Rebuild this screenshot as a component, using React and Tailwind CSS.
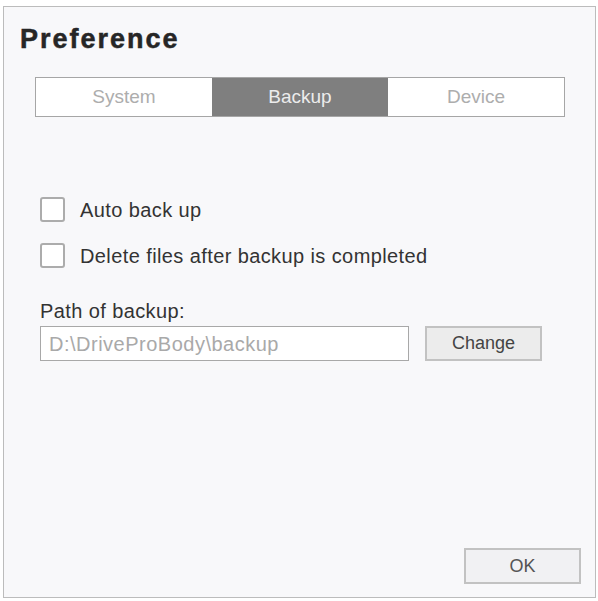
import { useState } from 'react';

const tabs = ['System', 'Backup', 'Device'];

const Check = ({ label, checked, onToggle }) => (
  <label className="flex items-center gap-[15px] cursor-pointer">
    <span
      onClick={onToggle}
      className="w-[25px] h-[25px] rounded-[3px] border-2 border-[#acacac] bg-white flex items-center justify-center"
    >
      {checked && <span className="w-[11px] h-[11px] bg-[#555]" />}
    </span>
    <span className="text-[20px] leading-none text-[#333] tracking-[0.4px]">{label}</span>
  </label>
);

export default function App() {
  const [tab, setTab] = useState('Backup');
  const [auto, setAuto] = useState(false);
  const [del, setDel] = useState(false);

  return (
    <div className="w-[598px] h-[601px] bg-white pt-[6px] pl-[3px] pr-[2px] pb-[3px] font-['Liberation_Sans',Arial,sans-serif]">
      <div className="h-full border border-[#bcbcbc] bg-[#f8f8fa] flex flex-col">
        <h1 className="pl-[16px] pt-[17px] text-[27px] leading-[30px] font-bold text-[#262626] tracking-[2px] [-webkit-text-stroke:0.5px_#262626]">
          Preference
        </h1>

        <div className="mt-[23px] ml-[31px] mr-[30px] h-[40px] grid grid-cols-3 border border-[#a6a6a6] bg-white">
          {tabs.map((t) => (
            <button
              key={t}
              onClick={() => setTab(t)}
              className={
                t === tab
                  ? 'bg-[#7f7f7f] text-[#ececec] text-[19px]'
                  : 'bg-white text-[#adadad] text-[19px]'
              }
            >
              {t}
            </button>
          ))}
        </div>

        <div className="pl-[36px] pt-[80px] flex flex-col gap-[21px]">
          <Check label="Auto back up" checked={auto} onToggle={() => setAuto(!auto)} />
          <Check
            label="Delete files after backup is completed"
            checked={del}
            onToggle={() => setDel(!del)}
          />
        </div>

        <div className="pl-[36px] pt-[33px]">
          <div className="text-[20px] leading-none text-[#333] tracking-[0.4px]">Path of backup:</div>
          <div className="mt-[5px] flex items-center gap-[16px]">
            <div className="w-[369px] h-[35px] border border-[#a8a8a8] bg-white flex items-center pl-[8px] text-[20px] text-[#a9a9a9] tracking-[0.5px]">
              D:\DriveProBody\backup
            </div>
            <button className="w-[117px] h-[35px] border-2 border-[#c2c2c2] bg-[#ececec] text-[18px] text-[#444]">
              Change
            </button>
          </div>
        </div>

        <div className="mt-auto mb-[13px] mr-[14px] flex justify-end">
          <button className="w-[117px] h-[36px] border-2 border-[#c2c2c2] bg-[#f1f1f3] text-[18px] text-[#555]">
            OK
          </button>
        </div>
      </div>
    </div>
  );
}
